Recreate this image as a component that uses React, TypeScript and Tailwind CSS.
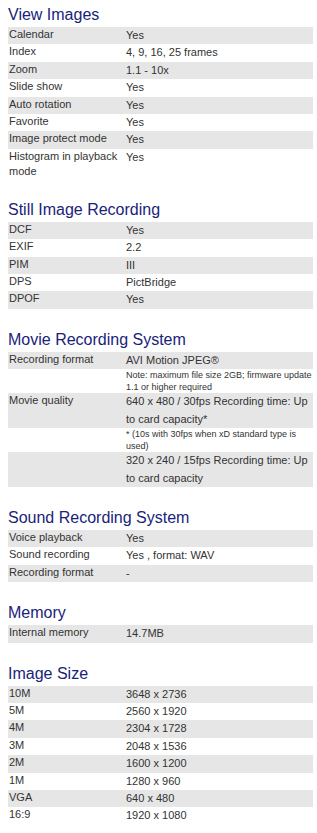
import React from 'react';

type Row = {
  label?: string;
  value: string;
  /** small footnote style row */
  note?: boolean;
};

type Section = {
  title: string;
  rows: Row[];
};

const sections: Section[] = [
  {
    title: 'View Images',
    rows: [
      { label: 'Calendar', value: 'Yes' },
      { label: 'Index', value: '4, 9, 16, 25 frames' },
      { label: 'Zoom', value: '1.1 - 10x' },
      { label: 'Slide show', value: 'Yes' },
      { label: 'Auto rotation', value: 'Yes' },
      { label: 'Favorite', value: 'Yes' },
      { label: 'Image protect mode', value: 'Yes' },
      { label: 'Histogram in playback mode', value: 'Yes' },
    ],
  },
  {
    title: 'Still Image Recording',
    rows: [
      { label: 'DCF', value: 'Yes' },
      { label: 'EXIF', value: '2.2' },
      { label: 'PIM', value: 'III' },
      { label: 'DPS', value: 'PictBridge' },
      { label: 'DPOF', value: 'Yes' },
    ],
  },
  {
    title: 'Movie Recording System',
    rows: [
      { label: 'Recording format', value: 'AVI Motion JPEG®' },
      { value: 'Note: maximum file size 2GB; firmware update 1.1 or higher required', note: true },
      { label: 'Movie quality', value: '640 x 480 / 30fps Recording time: Up to card capacity*' },
      { value: '* (10s with 30fps when xD standard type is used)', note: true },
      { value: '320 x 240 / 15fps Recording time: Up to card capacity' },
    ],
  },
  {
    title: 'Sound Recording System',
    rows: [
      { label: 'Voice playback', value: 'Yes' },
      { label: 'Sound recording', value: 'Yes , format: WAV' },
      { label: 'Recording format', value: '-' },
    ],
  },
  {
    title: 'Memory',
    rows: [{ label: 'Internal memory', value: '14.7MB' }],
  },
  {
    title: 'Image Size',
    rows: [
      { label: '10M', value: '3648 x 2736' },
      { label: '5M', value: '2560 x 1920' },
      { label: '4M', value: '2304 x 1728' },
      { label: '3M', value: '2048 x 1536' },
      { label: '2M', value: '1600 x 1200' },
      { label: '1M', value: '1280 x 960' },
      { label: 'VGA', value: '640 x 480' },
      { label: '16:9', value: '1920 x 1080' },
    ],
  },
];

function SpecRow({ row, shaded }: { row: Row; shaded: boolean }) {
  return (
    <div className={shaded ? 'flex bg-[#e6e6e6]' : 'flex'}>
      <div className="w-[118px] shrink-0 pl-[1px] pr-[4px] text-[11px] leading-[15px]">
        {row.label}
      </div>
      <div
        className={
          row.note
            ? 'flex-1 pr-[1px] text-[9px] leading-[12px]'
            : 'flex-1 pr-[2px] text-[11px] leading-[17.4px]'
        }
      >
        {row.value}
      </div>
    </div>
  );
}

function SpecSection({ section, first }: { section: Section; first: boolean }) {
  return (
    <section>
      <h2
        className={
          first
            ? 'mt-[5px] mb-[2px] text-[16px] leading-[20px] text-[#1a237a]'
            : 'mt-[21px] mb-[2px] text-[16px] leading-[20px] text-[#1a237a]'
        }
      >
        {section.title}
      </h2>
      <div className="w-[305px]">
        {section.rows.map((row, i) => (
          <SpecRow key={i} row={row} shaded={i % 2 === 0} />
        ))}
      </div>
    </section>
  );
}

export default function App() {
  return (
    <div className="min-h-[833px] w-[317px] bg-white pl-[8px] font-['Liberation_Sans',Arial,sans-serif] text-[#333]">
      {sections.map((s, i) => (
        <SpecSection key={s.title} section={s} first={i === 0} />
      ))}
    </div>
  );
}
